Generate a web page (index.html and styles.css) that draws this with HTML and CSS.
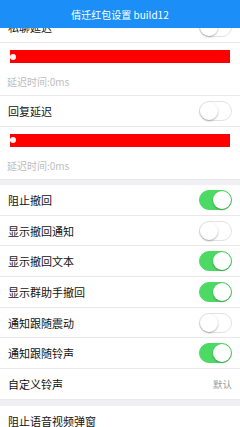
FILE: index.html
```html
<!DOCTYPE html>
<html lang="zh">
<head>
<meta charset="utf-8">
<link rel="stylesheet" href="styles.css">
</head>
<body>
<div class="header">倩迁红包设置 build12</div>
<div class="clip">
  <div class="row"><span class="label">私聊延迟</span><span class="toggle"></span></div>
</div>
<div class="slider-block">
  <div class="bar"><span class="dot"></span></div>
  <div class="hint">延迟时间:0ms</div>
</div>
<div class="row"><span class="label">回复延迟</span><span class="toggle"></span></div>
<div class="slider-block">
  <div class="bar"><span class="dot"></span></div>
  <div class="hint">延迟时间:0ms</div>
</div>
<div class="gap"></div>
<div class="row"><span class="label">阻止撤回</span><span class="toggle on"></span></div>
<div class="row"><span class="label">显示撤回通知</span><span class="toggle"></span></div>
<div class="row"><span class="label">显示撤回文本</span><span class="toggle on"></span></div>
<div class="row"><span class="label">显示群助手撤回</span><span class="toggle on"></span></div>
<div class="row"><span class="label">通知跟随震动</span><span class="toggle"></span></div>
<div class="row"><span class="label">通知跟随铃声</span><span class="toggle on"></span></div>
<div class="row"><span class="label">自定义铃声</span><span class="value">默认</span></div>
<div class="gap gap2"></div>
<div class="row"><span class="label">阻止语音视频弹窗</span></div>
</body>
</html>
```
FILE: styles.css
```css
html, body {
  margin: 0;
  padding: 0;
  background: #ffffff;
  overflow: hidden;
}
body {
  font-family: "Noto Sans CJK SC", "Noto Sans", sans-serif;
  width: 240px;
  height: 427px;
}
.header {
  height: 28px;
  background: #1b8ff7;
  color: #ffffff;
  font-size: 10px;
  line-height: 29px;
  text-align: center;
}
.clip {
  height: 15px;
  overflow: hidden;
  display: flex;
  flex-direction: column;
  justify-content: flex-end;
}
.clip .row {
  flex-shrink: 0;
}
.row {
  box-sizing: border-box;
  height: 30.7px;
  border-bottom: 1px solid #e8e8e8;
  display: flex;
  align-items: center;
  justify-content: space-between;
  padding: 0 8px;
}
.label {
  font-size: 11px;
  color: #111111;
  line-height: 12px;
}
.value {
  font-size: 9.5px;
  color: #999999;
}
.toggle {
  box-sizing: border-box;
  width: 33px;
  height: 20px;
  border-radius: 10px;
  border: 1px solid #e3e3e3;
  background: #ffffff;
  position: relative;
  flex-shrink: 0;
}
.toggle::after {
  content: "";
  position: absolute;
  top: 0;
  left: 0;
  width: 18px;
  height: 18px;
  border-radius: 50%;
  background: #ffffff;
  box-shadow: 0 1px 2px rgba(0, 0, 0, 0.3);
}
.toggle.on {
  background: #4cd964;
  border-color: #4cd964;
}
.toggle.on::after {
  left: 13px;
}
.slider-block {
  box-sizing: border-box;
  height: 53px;
  padding: 7px 10px 0;
  border-bottom: 1px solid #e8e8e8;
}
.bar {
  height: 13px;
  background: #ff0000;
  position: relative;
}
.dot {
  position: absolute;
  left: 0;
  top: 3.5px;
  width: 6px;
  height: 6px;
  border-radius: 50%;
  background: #f4f4f4;
}
.hint {
  margin: 13px 0 0 -3px;
  font-size: 10px;
  line-height: 12px;
  color: #bdbdbd;
}
.gap {
  height: 5.3px;
  background: #efeff4;
}
.gap2 {
  height: 6.4px;
}
```
